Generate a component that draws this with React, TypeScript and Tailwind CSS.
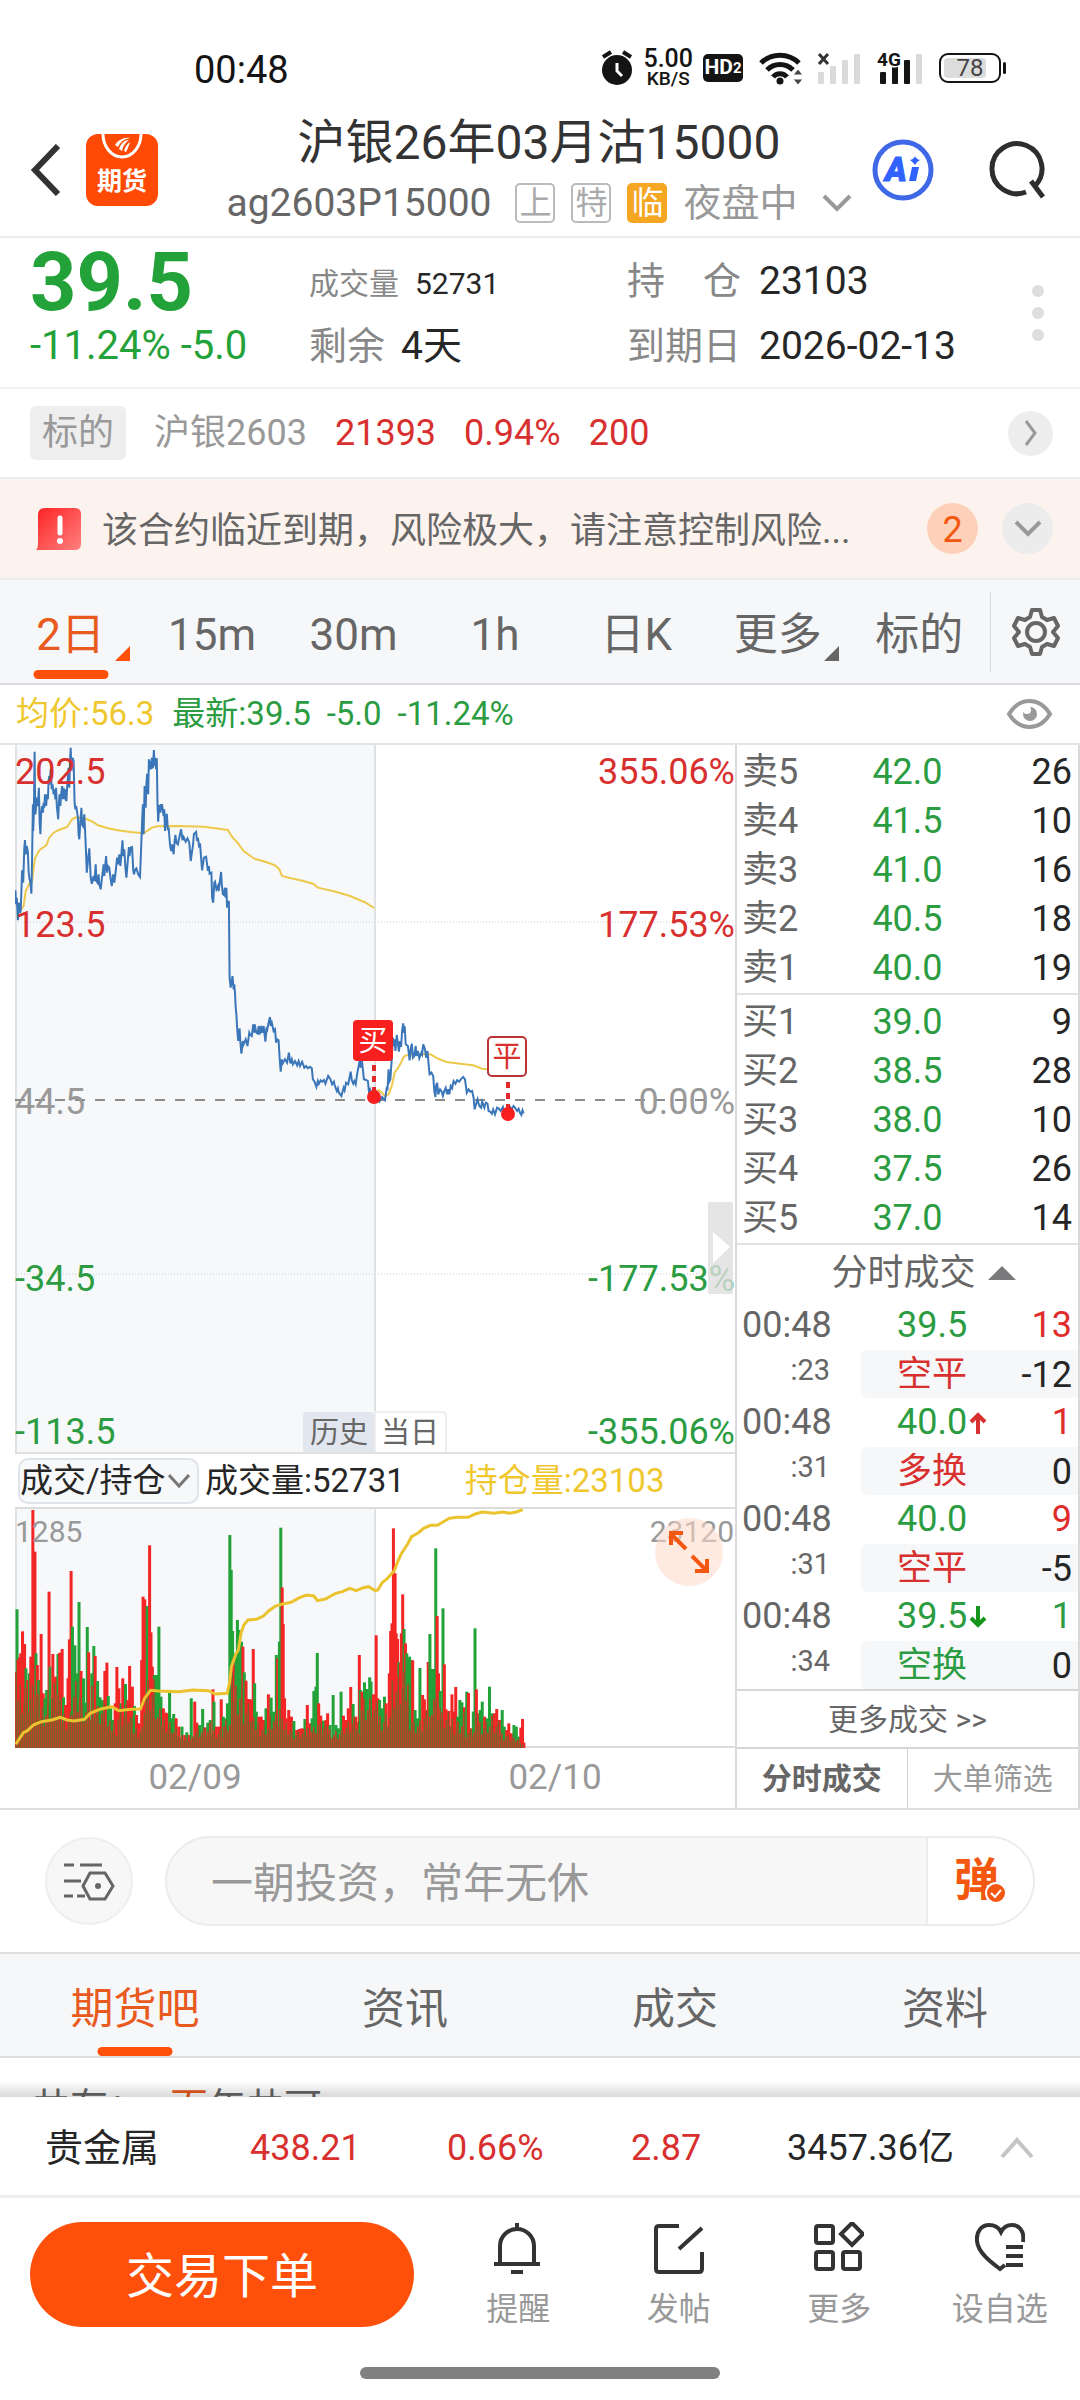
import React from "react";

const RED = "#d8302f";
const GREEN = "#2b9c42";
const GOLD = "#ecc94b";

type Point = [number, number];

const parsePoints = (data: string, sx: number, sy: number, dx: number, dy: number): Point[] =>
  data
    .trim()
    .split(/\s+/)
    .map((pair) => {
      const [x, y] = pair.split(",").map(Number);
      return [x / sx + dx, y / sy + dy];
    });

const toPath = (points: Point[]) => points.map(([x, y]) => `${x.toFixed(1)},${y.toFixed(1)}`).join(" ");

const PRICE = toPath(
  parsePoints(
    `43,478 45,520 47,500 50,568 53,515 56,545 58,540 60,480 62,418 65,455 68,350 70,327 72,370 75,345 78,365 80,420 82,440 85,455 88,488 90,380 92,220 93,300 95,240 97,62 98,180 99,250 103,200 106,225 109,170 111,270 113,310 115,250 118,225 120,245 122,215 124,230 126,190 129,225 132,190 134,205 136,150 138,135 140,160 142,115 145,175 147,160 150,190 152,175 155,205 157,170 159,225 163,265 165,215 167,190 169,225 171,190 174,165 176,205 178,170 180,205 182,175 184,205 186,210 188,170 190,140 192,110 194,170 196,90 198,50 200,120 203,80 206,90 209,215 211,235 213,225 218,258 220,310 222,325 225,270 228,230 230,280 232,285 236,250 240,340 243,425 247,380 250,352 254,440 257,458 262,435 265,450 268,400 270,450 273,455 276,430 278,460 282,475 285,445 288,420 290,400 292,435 297,375 300,425 302,405 306,410 310,445 313,465 317,430 320,455 323,430 328,380 331,400 334,370 337,405 343,328 345,375 348,355 351,410 354,440 358,385 361,348 363,375 366,350 370,348 373,415 375,430 379,415 382,412 387,430 392,438 394,385 396,330 398,270 400,220 402,310 405,165 408,230 410,160 412,128 415,190 417,85 419,115 421,90 423,115 425,80 428,112 431,57 433,105 435,80 437,115 439,82 441,220 443,272 445,235 447,222 449,245 451,222 454,222 458,255 460,235 462,300 465,260 467,248 470,298 472,290 476,340 479,360 482,340 486,370 489,330 491,312 494,335 498,340 503,315 507,295 511,328 514,318 520,332 525,322 530,335 534,390 538,360 540,345 543,310 549,303 552,330 554,320 558,350 560,337 566,418 571,380 577,377 582,420 585,405 587,428 592,425 594,500 597,515 600,455 602,452 606,475 610,465 612,480 619,423 621,460 624,490 627,492 630,470 632,500 634,470 636,530 638,512 641,512 643,740 646,770 649,750 651,735 654,775 656,760 658,785 660,830 662,850 664,890 667,930 671,892 673,935 676,968 680,930 682,940 688,925 693,945 698,905 700,910 705,915 709,880 712,905 713,880 718,905 722,908 724,885 728,910 731,885 735,905 738,885 743,932 746,895 748,898 752,875 756,858 758,885 761,875 766,900 770,895 773,935 776,925 780,928 783,980 786,1022 789,985 791,998 798,985 804,995 809,965 813,997 817,985 820,1000 826,990 832,1003 836,990 840,1005 846,992 852,1010 857,1005 862,1012 868,1007 873,1012 876,1045 881,1052 886,1068 890,1050 893,1058 898,1048 902,1052 907,1047 911,1058 919,1035 925,1045 930,1060 935,1052 937,1062 943,1080 946,1072 949,1085 956,1095 962,1070 965,1078 969,1055 975,1060 982,1022 985,1048 989,1058 992,1050 996,1060 1000,1030 1007,990 1010,1010 1013,985 1019,1045 1025,1047 1030,1050 1033,1080 1036,1075 1043,1100 1050,1075 1055,1100 1062,1112 1070,1098 1078,1108 1083,1068 1085,1078 1088,1015 1091,1050 1093,1045 1097,980 1100,920 1103,945 1105,925 1107,960 1111,912 1115,945 1117,962 1120,930 1123,948 1126,900 1129,877 1131,905 1133,885 1136,940 1142,945 1147,988 1150,955 1153,938 1156,980 1160,975 1164,945 1166,975 1170,960 1174,982 1180,965 1182,970 1185,940 1190,955 1193,980 1197,960 1200,1000 1203,1030 1208,1025 1213,1035 1216,1080 1219,1098 1221,1065 1224,1055 1227,1090 1232,1075 1236,1080 1240,1095 1244,1080 1248,1070 1252,1090 1255,1075 1258,1090 1262,1065 1266,1072 1270,1050 1275,1058 1280,1048 1286,1052 1290,1045 1297,1038 1302,1045 1307,1085 1312,1075 1317,1082 1322,1080 1326,1100 1329,1135 1333,1120 1337,1105 1342,1125 1347,1130 1350,1112 1356,1130 1360,1115 1365,1118 1368,1140 1373,1142 1377,1148 1381,1135 1386,1150 1392,1130 1396,1132 1402,1140 1408,1128 1413,1148 1422,1150 1428,1128 1432,1135 1438,1125 1443,1132 1448,1140 1452,1133 1456,1145 1460,1152 1463,1138 1466,1147`,
    2.8, 3, -15, -14,
  ),
);

const AVG_DAY1 = toPath(
  parsePoints(
    "60,535 66,525 72,480 82,458 90,450 94,410 98,382 110,358 130,342 138,320 150,305 165,297 188,288 202,265 212,259 235,261 255,270 275,283 300,291 325,297 365,303 402,307 425,290 440,286 500,285 570,287 638,297 650,318 665,335 682,360 712,383 745,393 770,403 782,415 790,435 815,442 850,450 878,459 890,470 940,482 980,495 1020,513 1048,531",
    2.8, 3, -15, -14,
  ),
);

const AVG_DAY2 = toPath(
  parsePoints(
    "1050,1080 1062,1078 1078,1095 1088,1090 1097,1065 1105,1025 1118,1005 1132,975 1150,970 1205,970 1225,982 1250,993 1300,1000 1325,1003 1350,1013 1365,1015",
    2.8, 3, -15, -14,
  ),
);

const OPEN_INTEREST = toPath(
  parsePoints(
    "46,733 60,710 68,698 80,692 97,675 120,665 150,660 175,652 195,660 215,663 245,658 262,640 290,628 325,620 345,632 380,628 408,627 420,595 437,571 460,573 520,575 560,570 605,572 625,582 660,580 667,545 672,500 685,462 692,450 700,400 708,375 720,360 745,358 765,348 780,333 800,318 818,313 845,307 870,293 890,285 912,288 922,302 945,297 975,280 995,275 1015,265 1035,272 1055,263 1070,260 1090,272 1097,270 1110,248 1125,235 1145,212 1155,185 1165,162 1185,130 1195,110 1215,98 1230,85 1250,76 1270,76 1285,67 1305,55 1330,52 1360,52 1380,42 1400,36 1435,40 1460,36 1480,40 1500,36 1518,29",
    2.904, 3, -15, -7,
  ),
);

const VOLUME_BARS = `48,328,g 51,480,r 55,472,r 59,460,r 64,394,r 70,432,r 74,505,g 79,540,r 84,520,g 88,470,r 94,30,r 100,155,r 103,460,g 107,495,r 111,540,g 118,402,r 124,580,r 129,595,g 134,570,g 141,275,r 144,500,g 152,462,r 160,530,r 167,462,g 172,458,r 179,447,r 183,592,g 189,615,r 196,535,r 200,418,r 205,213,r 209,380,g 216,436,g 221,520,g 228,306,g 234,513,r 241,535,g 247,608,g 252,381,g 256,457,r 265,520,g 271,438,g 275,468,r 282,543,g 289,592,g 296,600,g 303,513,r 309,488,r 313,588,g 320,625,g 326,660,g 333,610,r 338,501,r 344,565,r 350,610,g 355,535,r 363,552,g 370,600,r 375,498,r 383,560,r 389,618,g 395,645,r 402,670,r 410,480,r 414,290,r 419,298,r 426,318,g 433,136,r 437,397,r 441,500,r 447,525,g 454,525,g 460,380,g 466,590,g 473,625,r 480,638,r 485,640,r 491,578,g 497,655,g 503,642,g 510,655,r 518,680,r 527,680,g 535,705,r 541,697,g 548,705,r 554,595,g 564,605,r 570,668,r 578,675,g 587,627,g 595,682,r 602,668,g 609,660,g 617,568,r 620,605,g 627,680,r 635,680,r 641,598,r 647,650,g 654,655,g 659,610,g 666,105,g 670,210,g 674,393,g 677,475,r 684,460,g 688,360,g 693,390,g 700,425,g 704,440,r 708,517,g 713,542,r 720,597,r 727,598,r 734,447,r 738,550,g 743,635,g 750,650,r 757,650,r 764,660,r 771,625,g 778,583,r 786,593,g 793,635,g 801,465,g 805,475,r 810,425,g 814,83,g 818,262,r 821,372,r 825,595,r 830,655,r 837,630,r 845,650,r 852,663,g 860,690,r 868,687,r 875,685,r 884,657,g 891,615,r 898,670,r 905,655,g 910,573,g 916,560,g 920,459,g 924,610,r 930,647,r 938,662,g 945,660,r 950,640,r 957,675,g 966,585,g 974,675,g 981,685,g 989,575,g 996,647,r 1002,660,r 1010,625,r 1017,561,r 1024,612,g 1032,650,r 1042,465,r 1045,570,g 1050,575,r 1057,547,g 1065,567,g 1072,532,g 1076,545,g 1083,583,r 1091,406,r 1096,595,r 1101,600,g 1108,625,g 1115,590,g 1120,610,r 1129,520,r 1133,393,r 1137,370,r 1141,85,r 1146,220,r 1149,400,r 1153,417,r 1157,487,g 1161,490,r 1164,400,r 1168,283,r 1172,387,g 1176,430,r 1180,460,g 1184,480,g 1188,470,g 1193,480,g 1197,481,r 1204,630,g 1211,655,g 1218,504,g 1226,585,r 1231,598,r 1238,630,r 1242,486,r 1247,402,g 1253,507,g 1258,507,g 1264,145,g 1268,348,r 1272,520,r 1277,573,g 1285,325,g 1289,493,r 1294,628,r 1302,633,r 1311,583,r 1316,635,r 1322,561,r 1328,650,g 1334,600,g 1340,607,g 1347,622,r 1354,575,g 1359,579,r 1366,685,r 1373,635,g 1378,385,g 1382,568,r 1387,640,r 1393,630,g 1399,605,g 1406,650,r 1413,655,g 1420,560,g 1427,640,g 1434,640,r 1441,627,r 1449,660,r 1457,630,g 1463,680,g 1470,690,r 1476,670,r 1484,700,r 1491,675,g 1498,680,g 1505,710,g 1511,683,r 1516,657,r 1520,728,r`
  .split(" ")
  .map((s) => {
    const [x, y, c] = s.split(",");
    return { x: Number(x) / 2.904 - 15, y: Number(y) / 3 - 7, up: c === "r" };
  });

// Dense low-volume ticks that sit in front of the taller bars.
const VOLUME_BASE = Array.from({ length: 254 }, (_, i) => {
  const x = 1 + i * 2;
  const near = VOLUME_BARS.filter((b) => Math.abs(b.x - x) < 5).map((b) => b.y);
  const low = Math.min(236, Math.max(...near, 165));
  const noise = ((i * 7919) % 97) / 97;
  return { x, y: low + (240 - low) * noise * 0.6 };
});

const sells = [["卖5", "42.0", "26"], ["卖4", "41.5", "10"], ["卖3", "41.0", "16"], ["卖2", "40.5", "18"], ["卖1", "40.0", "19"]];
const buys = [["买1", "39.0", "9"], ["买2", "38.5", "28"], ["买3", "38.0", "10"], ["买4", "37.5", "26"], ["买5", "37.0", "14"]];

const trades = [
  { sec: ":23", price: "39.5", dir: "", qty: "13", up: true, kind: "空平", kindUp: true, delta: "-12" },
  { sec: ":31", price: "40.0", dir: "up", qty: "1", up: true, kind: "多换", kindUp: true, delta: "0" },
  { sec: ":31", price: "40.0", dir: "", qty: "9", up: true, kind: "空平", kindUp: true, delta: "-5" },
  { sec: ":34", price: "39.5", dir: "down", qty: "1", up: false, kind: "空换", kindUp: false, delta: "0" },
];

function Signal({ levels, label }: { levels: number; label: string }) {
  return (
    <svg width="48" height="34" viewBox="0 0 48 34" aria-hidden="true">
      {[0, 1, 2, 3].map((i) => (
        <rect key={i} x={3 + i * 12} y={21 - i * 6} width="6" height={12 + i * 6} rx="1" fill={i < levels ? "#141414" : "#dadada"} />
      ))}
      {label === "x" ? (
        <path d="M4 3l9 10M13 3l-9 10" stroke="#333" strokeWidth="3" />
      ) : (
        <text x="0" y="15" fontSize="19" fontWeight="700" fill="#141414" stroke="#fff" strokeWidth="3" paintOrder="stroke">{label}</text>
      )}
    </svg>
  );
}

function StatusBar() {
  return (
    <div className="flex h-[108px] items-end justify-between pr-[74px] pb-[20px] pl-[194px] text-[#141414]">
      <span className="text-[38px] leading-9">00:48</span>
      <div className="flex items-center gap-[10px]">
        <svg width="32" height="36" viewBox="0 0 32 36" aria-hidden="true">
          <circle cx="16" cy="20" r="15" fill="#141414" />
          <path d="M2 7l8-5M30 7l-8-5" stroke="#141414" strokeWidth="4" />
          <path d="M16 13v8l5 5" stroke="#fff" strokeWidth="3" fill="none" />
        </svg>
        <div className="flex flex-col items-center font-medium">
          <span className="text-[25px] leading-[22px]">5.00</span>
          <span className="text-[19px] leading-[18px]">KB/S</span>
        </div>
        <span className="flex h-7 w-10 items-center justify-center rounded-[5px] bg-[#141414] text-[21px] font-bold text-white">
          HD<sub className="bottom-0 text-[15px]">2</sub>
        </span>
        <div className="ml-[6px] flex items-center gap-[10px]">
          <svg width="46" height="36" viewBox="0 0 46 36" aria-hidden="true" fill="none" stroke="#141414" strokeWidth="5">
            <path d="M2 13a27 27 0 0 1 38 0M8 20a18 18 0 0 1 26 0M14 27a9 9 0 0 1 14 0" />
            <circle cx="21" cy="31" r="3.500" fill="#141414" stroke="none" />
            <path d="M34 25l5-6 5 6zM34 29l5 6 5-6z" fill="#444" stroke="#fff" strokeWidth="1" />
          </svg>
          <Signal levels={0} label="x" />
          <div className="ml-[4px]">
            <Signal levels={3} label="4G" />
          </div>
        </div>
        <div className="ml-1 flex items-center gap-[2px]">
          <span className="relative flex h-[30px] w-[62px] items-center justify-center rounded-[9px] border-2 border-[#141414] p-[3px] text-[24px]">
            <span className="absolute inset-y-[3px] left-[3px] w-[42px] rounded-[4px] bg-[#dcdcdc]" />
            <span className="relative text-[#444]">78</span>
          </span>
          <span className="h-3 w-[3px] rounded-full bg-[#141414]" />
        </div>
      </div>
    </div>
  );
}

function Header() {
  return (
    <header className="flex h-[130px] items-center justify-between border-b-2 border-[#ededed] pr-[32px] pb-1 pl-[30px]">
      <div className="flex flex-1 items-center gap-[24px]">
        <button type="button" aria-label="返回">
          <svg width="32" height="52" viewBox="0 0 32 52" fill="none" stroke="#333" strokeWidth="6">
            <path d="M28 2L5 26l23 24" />
          </svg>
        </button>
        <div className="relative flex h-[72px] w-[72px] items-end justify-center overflow-hidden rounded-[12px] bg-[#ff4a05] pb-[11px]">
          <svg className="absolute inset-x-0 top-0" width="72" height="30" viewBox="0 0 72 30" fill="none" aria-hidden="true">
            <path d="M17 0c0 12 8 23 19 23S55 12 55 0" stroke="#fff" strokeWidth="3" />
            <path d="M29 11c3-5 9-8 15-7-6 1-10 4-12 9zM33 15c2-6 6-9 10-9-4 3-6 6-7 11zM38 17c1-4 3-7 6-9-1 4-3 8-4 10z" fill="#fff" />
          </svg>
          <span className="text-[25px] leading-[26px] font-bold text-white">期货</span>
        </div>
      </div>
      <div className="flex flex-col items-center gap-[6px]">
        <h1 className="text-[48px] leading-[60px] text-[#333]">沪银26年03月沽15000</h1>
        <div className="flex items-center text-[38px] leading-[48px]">
          <span className="text-[39px] text-[#666]">ag2603P15000</span>
          <span className="ml-6 flex h-10 w-10 items-center justify-center rounded-[5px] border-2 border-[#bbb] text-[32px] text-[#aaa]">上</span>
          <span className="ml-4 flex h-10 w-10 items-center justify-center rounded-[5px] border-2 border-[#bbb] text-[32px] text-[#aaa]">特</span>
          <span className="ml-4 flex h-10 w-10 items-center justify-center rounded-[5px] bg-[#f5a623] text-[32px] text-white">临</span>
          <span className="ml-4 text-[#999]">夜盘中</span>
          <svg className="ml-6" width="30" height="20" viewBox="0 0 30 20" fill="none" stroke="#999" strokeWidth="4" aria-hidden="true">
            <path d="M2 3l13 13L28 3" />
          </svg>
        </div>
      </div>
      <div className="flex flex-1 items-center justify-end gap-[54px]">
        <button type="button" aria-label="Ai">
          <svg width="62" height="62" viewBox="0 0 62 62">
            <circle cx="31" cy="31" r="28" fill="none" stroke="#3f68e6" strokeWidth="5" />
            <text x="13" y="42" fontSize="33" fontWeight="900" fontStyle="italic" fill="#2f62ff" stroke="#2f62ff">A</text>
            <path d="M40 28h7l-3 14h-7z" fill="#2f62ff" />
            <path d="M43 17q1 3 5 4-4 2-5 5-2-3-5-5 4-1 5-4z" fill="#2f62ff" />
          </svg>
        </button>
        <button type="button" aria-label="搜索">
          <svg width="60" height="60" viewBox="0 0 60 60" fill="none" stroke="#2e2e2e" strokeWidth="5">
            <path d="M38 52A25 25 0 1 1 47 46M43 41L55 57" />
          </svg>
        </button>
      </div>
    </header>
  );
}

function Quote() {
  return (
    <section className="flex h-[151px] items-start border-b-2 border-[#f3f3f3] pr-9 pl-[30px] text-[39px] text-[#262626]">
      <div className="w-[279px] text-[#22a238]">
        <div className="pt-[6px] text-[81px] leading-[78px] font-bold">39.5</div>
        <div className="text-[40px] leading-[48px]">-11.24% -5.0</div>
      </div>
      <div className="w-[318px] pt-[20px]">
        <div className="flex h-[50px] items-center gap-4 text-[30px]">
          <span className="text-[#888]">成交量</span>
          <span>52731</span>
        </div>
        <div className="mt-[13px] flex h-[50px] items-center gap-4">
          <span className="text-[38px] text-[#888]">剩余</span>
          <span>4天</span>
        </div>
      </div>
      <div className="flex-1 pt-[18px]">
        <div className="flex h-[50px] items-center gap-[18px]">
          <span className="flex w-[114px] justify-between text-[38px] text-[#888]">
            <span>持</span>
            <span>仓</span>
          </span>
          <span>23103</span>
        </div>
        <div className="mt-[15px] flex h-[50px] items-center gap-[18px]">
          <span className="text-[38px] text-[#888]">到期日</span>
          <span>2026-02-13</span>
        </div>
      </div>
      <button type="button" aria-label="更多行情" className="flex flex-col gap-[10px] pt-[47px]">
        <span className="h-3 w-3 rounded-full bg-[#dedede]" />
        <span className="h-3 w-3 rounded-full bg-[#dedede]" />
        <span className="h-3 w-3 rounded-full bg-[#dedede]" />
      </button>
    </section>
  );
}

function Underlying() {
  return (
    <section className="flex h-[90px] items-center border-b-2 border-[#ededed] pr-[27px] pl-[30px] text-[36px]">
      <span className="flex h-[54px] w-24 items-center justify-center rounded-[6px] bg-[#eee] text-[#999]">标的</span>
      <span className="ml-7 text-[#999]">沪银2603</span>
      <span className="ml-7 text-[#d8302f]">21393</span>
      <span className="ml-7 text-[#d8302f]">0.94%</span>
      <span className="ml-7 text-[#d8302f]">200</span>
      <button type="button" aria-label="查看标的" className="ml-auto flex h-[45px] w-[45px] items-center justify-center rounded-full bg-[#ededed]">
        <svg width="14" height="26" viewBox="0 0 14 26" fill="none" stroke="#999" strokeWidth="3">
          <path d="M2 1l9 12-9 12" />
        </svg>
      </button>
    </section>
  );
}

function Warning() {
  return (
    <section className="flex h-[101px] items-center border-b-2 border-[#ededed] bg-[#fdf3ee] pr-[27px] pl-[36px]">
      <svg width="46" height="44" viewBox="0 0 46 44" aria-hidden="true">
        <defs>
          <linearGradient id="alert" x1="0" y1="0" x2="1" y2="1">
            <stop offset="0" stopColor="#fc2323" />
            <stop offset="1" stopColor="#ff8080" />
          </linearGradient>
        </defs>
        <path d="M9 1h30q6 0 6 6v30q0 6-6 6H0q2-2 2-6V8q0-7 7-7z" fill="url(#alert)" />
        <path d="M24 11v15" stroke="#fff" strokeWidth="5" strokeLinecap="round" />
        <circle cx="24" cy="34" r="3" fill="#fff" />
      </svg>
      <p className="ml-5 flex-1 truncate pt-1 text-[36px] text-[#666]">该合约临近到期，风险极大，请注意控制风险...</p>
      <span className="flex h-[51px] w-[51px] items-center justify-center rounded-full bg-[#fdd0ba] pt-[2px] text-[36px] text-[#f4570f]">2</span>
      <button type="button" aria-label="展开提示" className="ml-[24px] flex h-[51px] w-[51px] items-center justify-center rounded-full bg-[#ececec]">
        <svg width="28" height="18" viewBox="0 0 28 18" fill="none" stroke="#999" strokeWidth="4">
          <path d="M2 2l12 12L26 2" />
        </svg>
      </button>
    </section>
  );
}

function PeriodTabs() {
  const tabs = ["2日", "15m", "30m", "1h", "日K", "更多", "标的"];
  return (
    <nav className="flex h-[105px] items-center border-b-2 border-[#d9dbde] bg-[#f6f7f9]">
      <div className="flex flex-1">
        {tabs.map((t, i) => (
          <button key={t} type="button" className={`relative flex h-[103px] flex-1 items-center justify-center pt-[6px] text-[44px] ${i === 0 ? "text-[#e85a1e]" : "text-[#666]"}`}>
            {t}
            {(i === 0 || i === 5) && (
              <svg className={i === 0 ? "absolute right-[11px] bottom-[22px]" : "absolute right-[10px] bottom-[22px]"} width="15" height="15" viewBox="0 0 15 15" aria-hidden="true">
                <path d="M15 0v15H0z" fill={i === 0 ? "#ff500b" : "#666"} />
              </svg>
            )}
            {i === 0 && <span className="absolute bottom-1 left-1/2 h-[9px] w-[75px] -translate-x-1/2 rounded-full bg-[#ff500b]" />}
          </button>
        ))}
      </div>
      <div className="flex h-20 w-[90px] items-center justify-center border-l border-[#d9d9d9]">
        <button type="button" aria-label="设置">
          <svg width="48" height="50" viewBox="0 0 48 50" fill="none" stroke="#666" strokeWidth="4" strokeLinejoin="round">
            <path d="M20 3h8l2 7 5 3 7-2 4 8-5 6 5 6-4 8-7-2-5 3-2 7h-8l-2-7-5-3-7 2-4-8 5-6-5-6 4-8 7 2 5-3z" />
            <circle cx="24" cy="25" r="9" />
          </svg>
        </button>
      </div>
    </nav>
  );
}

function InfoLine() {
  return (
    <div className="flex h-[60px] items-center border-b-2 border-[#e4e4e4] pr-[27px] pl-4 text-[33px] text-[#2b9c42]">
      <span className="text-[#efc72f]">均价:56.3</span>
      <span className="ml-[18px]">最新:39.5</span>
      <span className="ml-4">-5.0</span>
      <span className="ml-4">-11.24%</span>
      <button type="button" aria-label="显示设置" className="ml-auto">
        <svg width="47" height="32" viewBox="0 0 47 32" fill="none">
          <path d="M3 16Q11 3 23.500 3T44 16Q36 29 23.500 29T3 16z" stroke="#999" strokeWidth="4" />
          <circle cx="24" cy="16" r="7" fill="#999" />
          <circle cx="21" cy="12" r="4" fill="#fff" />
        </svg>
      </button>
    </div>
  );
}

function PriceChart() {
  return (
    <svg className="block w-full" viewBox="0 0 720 709" fontSize="36" role="img" aria-label="分时走势">
      <rect x="0" y="0" width="360" height="708" fill="#f6f8fa" />
      <path d="M1 0V708M360 0V708" stroke="#e0e1e3" strokeWidth="2" />
      <path d="M0 177H720M0 529H720" stroke="#e3e3e3" strokeWidth="2" strokeDasharray="1 2" />
      <polyline points={AVG_DAY1} fill="none" stroke={GOLD} strokeWidth="2" />
      <polyline points={AVG_DAY2} fill="none" stroke={GOLD} strokeWidth="2" />
      <path d="M0 355H700" stroke="#8c8c8c" strokeWidth="2" strokeDasharray="10 10" />
      <polyline points={PRICE} fill="none" stroke="#3a76b8" strokeWidth="2" />
      <g fill={RED}>
        <text x="0" y="39">202.5</text>
        <text x="0" y="192">123.5</text>
        <text x="720" y="39" textAnchor="end">355.06%</text>
        <text x="720" y="192" textAnchor="end">177.53%</text>
      </g>
      <g fill="#999">
        <text x="0" y="369">44.5</text>
        <text x="720" y="369" textAnchor="end">0.00%</text>
      </g>
      <g fill={GREEN}>
        <text x="0" y="546">-34.5</text>
        <text x="0" y="699">-113.5</text>
        <text x="720" y="546" textAnchor="end">-177.53%</text>
        <text x="720" y="699" textAnchor="end">-355.06%</text>
      </g>
      <g stroke="#e02a2a" strokeWidth="4" strokeDasharray="6 5">
        <path d="M359 320V350M493 337V366" />
      </g>
      <circle cx="359" cy="352" r="7" fill="#f81f1f" />
      <circle cx="493" cy="369" r="7" fill="#f81f1f" />
      <g fontSize="29" textAnchor="middle">
        <rect x="338" y="275" width="40" height="41" rx="4" fill="#f81f1f" />
        <text x="358" y="306" fill="#fff">买</text>
        <rect x="473" y="292" width="38" height="39" rx="4" fill="#fff" stroke="#b93535" strokeWidth="2" />
        <text x="492" y="322" fill={RED}>平</text>
      </g>
      <g fontSize="29" fill="#666" textAnchor="middle">
        <rect x="288" y="667" width="72" height="41" rx="4" fill="#e2e6ef" />
        <text x="324" y="698">历史</text>
        <path d="M360 667h67q4 0 4 4v37h-71z" fill="#fff" stroke="#eeeef2" strokeWidth="2" />
        <text x="395" y="698">当日</text>
      </g>
      <rect x="693" y="457" width="25" height="92" rx="2" fill="#dedede" fillOpacity="0.8" />
      <path d="M698 487l17 15-17 16z" fill="#fff" />
      <path d="M0 708H720" stroke="#e0e0e0" strokeWidth="2" />
    </svg>
  );
}

function VolumeChart() {
  return (
    <svg className="block w-full" viewBox="0 0 720 241" fontSize="30" fill="#999" role="img" aria-label="成交量与持仓量">
      <rect x="0" y="0" width="360" height="240" fill="#f6f8fa" />
      <path d="M1 0V240M360 0V240" stroke="#e0e1e3" strokeWidth="2" />
      <path d="M0 1H720M0 240H720" stroke="#dcdcdc" strokeWidth="2" />
      <text x="719" y="35" textAnchor="end">23120</text>
      {VOLUME_BARS.map((b, i) => (
        <rect key={i} x={b.x - 1} y={b.y} width="3" height={241 - b.y} fill={b.up ? "#f32626" : "#22a238"} />
      ))}
      {VOLUME_BASE.map((b, i) => (
        <g key={i}>
          <rect x={b.x - 1} y={b.y} width="1" height={241 - b.y} fill="#c24326" />
          <rect x={b.x} y={b.y} width="1" height={241 - b.y} fill="#77602c" />
        </g>
      ))}
      <text x="0" y="35">1285</text>
      <polyline points={OPEN_INTEREST} fill="none" stroke="#eac32e" strokeWidth="3" />
      <circle cx="674" cy="45" r="34" fill="#ffd9c9" fillOpacity="0.55" />
      <path d="M671 42l-15-15M656 38V26h12M677 49l15 15M692 52v12h-12" fill="none" stroke="#f4570f" strokeWidth="4" />
    </svg>
  );
}

function ChartColumn() {
  return (
    <div className="flex min-w-0 flex-1 flex-col pl-[15px]">
      <PriceChart />
      <div className="flex h-[53px] items-center text-[33px] text-[#262626]">
        <button type="button" className="ml-[3px] flex h-[46px] w-[181px] items-center gap-[2px] rounded-[10px] border-2 border-[#dfe3ea] bg-[#f6f8fa] whitespace-nowrap">
          成交/持仓
          <svg width="22" height="16" viewBox="0 0 22 16" fill="none" stroke="#777" strokeWidth="3" aria-hidden="true">
            <path d="M1 2l10 11L21 2" />
          </svg>
        </button>
        <span className="ml-[6px]">成交量:52731</span>
        <span className="ml-[60px] text-[#efc72f]">持仓量:23103</span>
      </div>
      <VolumeChart />
      <div className="grid flex-1 grid-cols-2 items-center text-center text-[35px] leading-[60px] text-[#999]">
        <span>02/09</span>
        <span>02/10</span>
      </div>
    </div>
  );
}

function Book({ rows, label }: { rows: string[][]; label: string }) {
  return (
    <table aria-label={label} className="w-full table-fixed border-b-2 border-[#e2e2e2] text-[36px]">
      <tbody>
        <tr className="h-[3px]" aria-hidden="true"><td colSpan={3} /></tr>
        {rows.map(([name, price, qty]) => (
          <tr key={name} className="h-[49px] leading-[49px]">
            <td className="w-[112px] p-0 pl-[5px] text-[#666]">{name}</td>
            <td className="p-0 text-center text-[#2b9c42]">{price}</td>
            <td className="w-[112px] p-0 pr-[6px] text-right text-[#262626]">{qty}</td>
          </tr>
        ))}
      </tbody>
    </table>
  );
}

function Trades() {
  return (
    <ul className="text-[36px]">
      {trades.map((t, i) => (
        <li key={i} className="grid grid-cols-[124px_1fr] text-[#666]">
          <span className="pl-[5px] leading-[49px]">00:48</span>
          <span className="flex justify-between pr-[6px] pl-[36px] leading-[49px]">
            <span className="flex items-center text-[#2b9c42]">
              {t.price}
              {t.dir !== "" && (
                <svg className="ml-[2px]" width="18" height="22" viewBox="0 0 18 22" fill="none" stroke={t.dir === "up" ? RED : "#16951c"} strokeWidth="4" aria-hidden="true">
                  <path d={t.dir === "up" ? "M9 22V3M2 10l7-7 7 7" : "M9 0v19M2 12l7 7 7-7"} />
                </svg>
              )}
            </span>
            <span className={t.up ? "text-[#e02b2b]" : "text-[#2b9c42]"}>{t.qty}</span>
          </span>
          <span className="pr-[31px] text-right text-[29px] leading-10">{t.sec}</span>
          <span className="flex h-12 justify-between rounded-l-[6px] bg-[#f6f7f9] pr-[6px] pl-[36px] leading-[50px]">
            <span className={t.kindUp ? "text-[35px] text-[#d8302f]" : "text-[35px] text-[#2b9c42]"}>{t.kind}</span>
            <span className="text-[#262626]">{t.delta}</span>
          </span>
        </li>
      ))}
    </ul>
  );
}

function OrderPanel() {
  return (
    <aside className="flex w-[345px] flex-col border-x-2 border-[#dadada]">
      <Book rows={sells} label="卖盘" />
      <Book rows={buys} label="买盘" />
      <button type="button" className="flex h-[56px] items-center justify-center gap-3 pl-8 text-[36px] text-[#666]">
        分时成交
        <svg width="28" height="14" viewBox="0 0 28 14" aria-hidden="true">
          <path d="M0 14L14 0l14 14z" fill="#7a7a7d" />
        </svg>
      </button>
      <Trades />
      <button type="button" className="flex h-[60px] items-center justify-center border-y-2 border-[#d6d6d6] text-[30px] text-[#666]">更多成交 &gt;&gt;</button>
      <div className="grid flex-1 grid-cols-2 text-[30px]">
        <button type="button" className="border-r border-[#d0d0d0] font-bold text-[#666]">分时成交</button>
        <button type="button" className="text-[#999]">大单筛选</button>
      </div>
    </aside>
  );
}

function CommentBar() {
  return (
    <section className="flex h-[144px] items-center border-b-2 border-[#dedede] pr-[45px] pl-[45px]">
      <button type="button" aria-label="筛选" className="flex h-[88px] w-[88px] items-center justify-center rounded-full border-2 border-[#eee] bg-[#f7f7f7]">
        <svg width="52" height="40" viewBox="0 0 52 40" fill="none" stroke="#666" strokeWidth="3">
          <path d="M1 4h10M17 4h22M1 20h17M1 35h9M14 35h8" />
          <path d="M27 12h15l8 13-8 13H27l-7-13z" />
          <circle cx="35" cy="25" r="3" fill="#666" stroke="none" />
        </svg>
      </button>
      <div className="ml-8 flex h-[90px] flex-1 overflow-hidden rounded-full border-2 border-[#ececec] bg-[#f7f7f7]">
        <input aria-label="评论" placeholder="一朝投资，常年无休" className="min-w-0 flex-1 bg-transparent pt-1 pl-[44px] text-[42px] outline-none placeholder:text-[#999]" />
        <button type="button" className="relative flex w-[107px] items-center justify-center border-l-2 border-[#ececec] bg-white pr-2 text-[45px] font-bold text-[#f4570f]">
          弹
          <svg className="absolute right-[26px] bottom-[20px]" width="22" height="22" viewBox="0 0 22 22" aria-hidden="true">
            <circle cx="11" cy="11" r="10" fill="#f4570f" stroke="#fff" strokeWidth="2" />
            <path d="M6 11l4 4 6-7" fill="none" stroke="#fff" strokeWidth="2" />
          </svg>
        </button>
      </div>
    </section>
  );
}

function ForumTabs() {
  return (
    <nav className="grid h-[104px] grid-cols-4 border-b-2 border-[#dedede] bg-[#f6f7f9] text-[43px] text-[#666]">
      {["期货吧", "资讯", "成交", "资料"].map((t, i) => (
        <button key={t} type="button" className={i === 0 ? "relative pt-2 text-[#e85a1e]" : "pt-2"}>
          {t}
          {i === 0 && <span className="absolute bottom-0 left-1/2 h-[9px] w-[75px] -translate-x-1/2 rounded-full bg-[#ff500b]" />}
        </button>
      ))}
    </nav>
  );
}

function Footer() {
  const actions: [string, React.ReactNode][] = [
    ["提醒", <path key="a" d="M24 1v6M7 41V24a17 17 0 0 1 34 0v17M1 42h46M18 50h12" />],
    ["发帖", <path key="b" d="M25 4H5Q2 4 2 7v40q0 3 3 3h40q3 0 3-3V30M25 27L48 6" />],
    ["更多", <path key="c" d="M4 4h13q2 0 2 2v13q0 2-2 2H4q-2 0-2-2V6q0-2 2-2zM4 30h13q2 0 2 2v13q0 2-2 2H4q-2 0-2-2V32q0-2 2-2zM31 30h13q2 0 2 2v13q0 2-2 2H31q-2 0-2-2V32q0-2 2-2zM38 1l11 11-11 11-11-11z" />],
    ["设自选", <path key="d" d="M48 20C50 8 43 3 37 3c-6 0-9 3-11 7C24 6 20 3 14 3 7 3 1 9 2 19c1 12 15 22 23 28l5-4M31 25h17M31 34h17M31 43h17" />],
  ];
  return (
    <footer className="relative bg-white">
      <div className="pointer-events-none absolute inset-x-0 bottom-full h-4 bg-linear-to-t from-black/15 to-transparent" />
      <div className="flex h-[101px] items-center border-b-3 border-[#ededed] pt-1 pr-[46px] pl-[45px] text-[36px] text-[#d8302f]">
        <span className="w-[205px] text-[38px] text-[#262626]">贵金属</span>
        <span className="w-[197px]">438.21</span>
        <span className="w-[184px]">0.66%</span>
        <span className="w-[156px]">2.87</span>
        <span className="text-[#262626]">3457.36亿</span>
        <button type="button" aria-label="展开指数" className="ml-auto">
          <svg width="34" height="22" viewBox="0 0 34 22" fill="none" stroke="#c4c4c4" strokeWidth="4">
            <path d="M2 20L17 3l15 17" />
          </svg>
        </button>
      </div>
      <div className="flex items-start pt-6 pl-[30px]">
        <button type="button" className="h-[105px] w-[384px] rounded-full bg-[#ff500b] pt-1 text-[48px] text-white">交易下单</button>
        <div className="ml-[24px] grid flex-1 grid-cols-4">
          {actions.map(([label, icon]) => (
            <button key={label} type="button" className="flex flex-col items-center gap-[14px] text-[32px] leading-10 whitespace-nowrap text-[#999]">
              <svg width="50" height="53" viewBox="0 0 50 53" fill="none" stroke="#333" strokeWidth="4" aria-hidden="true">
                {icon}
              </svg>
              {label}
            </button>
          ))}
        </div>
      </div>
      <div className="flex justify-center pt-[38px] pb-[21px]">
        <span className="h-3 w-1/3 rounded-full bg-[#808080]" />
      </div>
    </footer>
  );
}

export default function App() {
  return (
    <div className="flex h-screen flex-col bg-white font-['Roboto','Noto_Sans_CJK_SC',sans-serif]" lang="zh-CN">
      <main className="min-h-0 flex-1 overflow-y-auto [scrollbar-width:none]">
        <StatusBar />
        <Header />
        <Quote />
        <Underlying />
        <Warning />
        <PeriodTabs />
        <InfoLine />
        <section className="flex border-b-2 border-[#dedede]">
          <ChartColumn />
          <OrderPanel />
        </section>
        <CommentBar />
        <ForumTabs />
        <p className="px-8 pt-[23px] text-[38px] leading-[52px] text-[#666]">
          共有：<span className="ml-6 text-[#e85a1e]">百</span>年共可
        </p>
      </main>
      <Footer />
    </div>
  );
}
